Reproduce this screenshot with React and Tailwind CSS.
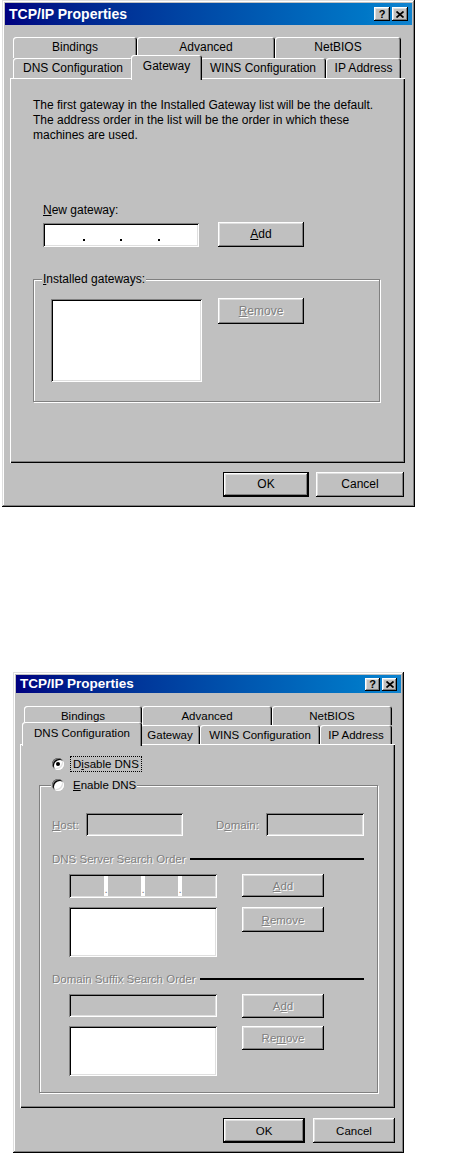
import React from 'react';

// win98 bevels, written out in full so tailwind picks them up
const RAISED = 'shadow-[inset_-1px_-1px_#000000,inset_1px_1px_#ffffff,inset_-2px_-2px_#808080,inset_2px_2px_#dfdfdf]';
const DEFAULT_BTN = 'shadow-[inset_0_0_0_1px_#000000,inset_-2px_-2px_#000000,inset_2px_2px_#ffffff,inset_-3px_-3px_#808080,inset_3px_3px_#dfdfdf]';
const SUNKEN = 'shadow-[inset_1px_1px_#808080,inset_-1px_-1px_#ffffff,inset_2px_2px_#000000,inset_-2px_-2px_#dfdfdf]';
const WINDOW = 'shadow-[inset_-1px_-1px_#000000,inset_1px_1px_#dfdfdf,inset_-2px_-2px_#808080,inset_2px_2px_#ffffff]';
const PANEL = 'shadow-[inset_1px_1px_#ffffff,inset_-1px_-1px_#000000,inset_-2px_-2px_#808080]';
const TAB = 'shadow-[inset_1px_1px_#ffffff,inset_-1px_0_#000000,inset_-2px_0_#808080]';
const ETCHED = 'border border-[#808080] shadow-[inset_1px_1px_#ffffff,1px_1px_#ffffff]';
const DISABLED = 'text-[#808080] [text-shadow:1px_1px_0_#ffffff]';

function CloseGlyph() {
  return (
    <svg width="8" height="7" viewBox="0 0 8 7">
      <path d="M0.5 0.5L7.5 6.5M7.5 0.5L0.5 6.5" stroke="#000000" strokeWidth="1.7" />
    </svg>
  );
}

function TitleBar({ className, textClass, btnClass }) {
  return (
    <div className={`flex items-center justify-between bg-linear-to-r from-[#000080] to-[#1084d0] ${className}`}>
      <span className={`font-bold text-white ${textClass}`}>TCP/IP Properties</span>
      <div className="flex gap-[2px]">
        <div className={`flex items-center justify-center bg-[#c0c0c0] ${RAISED} ${btnClass} text-[11px] font-bold leading-none text-black`}>?</div>
        <div className={`flex items-center justify-center bg-[#c0c0c0] ${RAISED} ${btnClass}`}>
          <CloseGlyph />
        </div>
      </div>
    </div>
  );
}

function Tab({ className, children }) {
  return (
    <div className={`flex shrink-0 items-center justify-center rounded-t-[3px] bg-[#c0c0c0] ${TAB} ${className}`}>
      {children}
    </div>
  );
}

function Button({ className, children, disabled, isDefault }) {
  return (
    <div
      className={`flex shrink-0 items-center justify-center bg-[#c0c0c0] ${isDefault ? DEFAULT_BTN : RAISED} ${disabled ? DISABLED : 'text-black'} ${className}`}
    >
      {children}
    </div>
  );
}

function Radio({ checked }) {
  return (
    <div className={`flex h-[12px] w-[12px] shrink-0 items-center justify-center rounded-full bg-white ${SUNKEN}`}>
      {checked && <div className="h-[4px] w-[4px] rounded-full bg-black" />}
    </div>
  );
}

function IpDot() {
  return <div className="mb-[6px] h-[2px] w-[2px] self-end bg-black" />;
}

function GatewayDialog() {
  return (
    <div className={`ml-[2px] flex h-[507px] w-[413px] flex-col bg-[#c0c0c0] p-[3px] ${WINDOW}`}>
      <TitleBar className="h-[22px] pl-[4px] pr-[4px]" textClass="text-[14px]" btnClass="h-[14px] w-[16px]" />

      <div className="ml-[5px] mt-[12px] w-[395px] text-[12px] leading-[15px] text-black">
        <div className="ml-[3px] flex h-[21px]">
          <Tab className="h-[21px] w-[124px]">Bindings</Tab>
          <Tab className="h-[21px] w-[138px]">Advanced</Tab>
          <Tab className="h-[21px] w-[126px]">NetBIOS</Tab>
        </div>
        <div className="ml-[3px] flex h-[20px] items-end">
          <Tab className="h-[20px] w-[120px]">DNS Configuration</Tab>
          <Tab className="relative z-10 -mx-[2px] mb-[-2px] h-[25px] w-[71px] pb-[3px]">Gateway</Tab>
          <Tab className="h-[20px] w-[126px]">WINS Configuration</Tab>
          <Tab className="h-[20px] w-[75px]">IP Address</Tab>
        </div>

        <div className={`h-[385px] pl-[23px] pt-[20px] ${PANEL}`}>
          <p>
            The first gateway in the Installed Gateway list will be the default.
            <br />
            The address order in the list will be the order in which these
            <br />
            machines are used.
          </p>

          <div className="ml-[10px] mt-[60px]">
            <u>N</u>ew gateway:
          </div>
          <div className="ml-[10px] mt-[4px] flex items-end">
            <div className={`flex h-[24px] w-[156px] bg-white px-[4px] ${SUNKEN}`}>
              <span className="flex-1" />
              <IpDot />
              <span className="flex-1" />
              <IpDot />
              <span className="flex-1" />
              <IpDot />
              <span className="flex-1" />
            </div>
            <Button className="ml-[19px] h-[25px] w-[86px]">
              <span>
                <u>A</u>dd
              </span>
            </Button>
          </div>

          <div className={`relative mt-[32px] h-[123px] w-[347px] ${ETCHED}`}>
            <div className="absolute -top-[8px] left-[8px] bg-[#c0c0c0] px-[1px]">
              <u>I</u>nstalled gateways:
            </div>
            <div className="flex items-start pl-[17px] pt-[19px]">
              <div className={`h-[83px] w-[151px] bg-white ${SUNKEN}`} />
              <Button disabled className="-mt-[1px] ml-[16px] h-[26px] w-[86px]">
                <span>
                  <u>R</u>emove
                </span>
              </Button>
            </div>
          </div>
        </div>

        <div className="mr-[1px] mt-[9px] flex justify-end gap-[7px]">
          <Button isDefault className="h-[25px] w-[86px]">OK</Button>
          <Button className="h-[25px] w-[88px]">Cancel</Button>
        </div>
      </div>
    </div>
  );
}

function SearchHeading({ children }) {
  return (
    <div className="ml-[12px] flex w-[312px] items-center">
      <span className={DISABLED}>{children}</span>
      <div className="ml-[4px] h-[2px] flex-1 bg-black" />
    </div>
  );
}

function DnsDialog() {
  return (
    <div className={`ml-[13px] mt-[165px] flex h-[481px] w-[391px] flex-col bg-[#c0c0c0] p-[3px] ${WINDOW}`}>
      <TitleBar className="h-[18px] pl-[4px] pr-[4px]" textClass="text-[13.5px]" btnClass="h-[13px] w-[15px]" />

      <div className="ml-[4px] mt-[13px] w-[375px] text-[11.5px] leading-[14px] text-black">
        <div className="ml-[4px] flex h-[19px]">
          <Tab className="h-[19px] w-[118px]">Bindings</Tab>
          <Tab className="h-[19px] w-[130px]">Advanced</Tab>
          <Tab className="h-[19px] w-[120px]">NetBIOS</Tab>
        </div>
        <div className="ml-[4px] flex h-[19px] items-end">
          <Tab className="relative z-10 -mx-[2px] mb-[-2px] h-[24px] w-[120px] pb-[3px]">DNS Configuration</Tab>
          <Tab className="h-[19px] w-[60px]">Gateway</Tab>
          <Tab className="h-[19px] w-[120px]">WINS Configuration</Tab>
          <Tab className="h-[19px] w-[72px]">IP Address</Tab>
        </div>

        <div className={`h-[364px] pt-[12px] ${PANEL}`}>
          <div className="ml-[32px] flex h-[16px] items-center">
            <Radio checked />
            <span className="ml-[6px] border border-dotted border-black px-[2px]">
              D<u>i</u>sable DNS
            </span>
          </div>

          <div className={`relative ml-[19px] mt-[13px] h-[308px] w-[339px] ${ETCHED}`}>
            <div className="absolute -top-[8px] left-[11px] flex items-center bg-[#c0c0c0] px-[1px]">
              <Radio />
              <span className="ml-[9px]">
                <u>E</u>nable DNS
              </span>
            </div>

            <div className="ml-[12px] mt-[27px] flex items-center">
              <span className={`w-[34px] ${DISABLED}`}>
                <u>H</u>ost:
              </span>
              <div className={`h-[23px] w-[97px] bg-[#c0c0c0] ${SUNKEN}`} />
              <span className={`ml-[33px] w-[50px] ${DISABLED}`}>
                D<u>o</u>main:
              </span>
              <div className={`h-[23px] w-[98px] bg-[#c0c0c0] ${SUNKEN}`} />
            </div>

            <div className="mt-[16px]">
              <SearchHeading>DNS Server Search Order</SearchHeading>
            </div>

            <div className="ml-[29px] mt-[8px] flex items-start">
              <div className={`flex h-[24px] w-[148px] p-[2px] ${SUNKEN}`}>
                <div className="flex-1 bg-[#c0c0c0]" />
                <div className="flex w-[4px] items-end justify-center bg-white text-[#808080]">.</div>
                <div className="flex-1 bg-[#c0c0c0]" />
                <div className="flex w-[4px] items-end justify-center bg-white text-[#808080]">.</div>
                <div className="flex-1 bg-[#c0c0c0]" />
                <div className="flex w-[4px] items-end justify-center bg-white text-[#808080]">.</div>
                <div className="flex-1 bg-[#c0c0c0]" />
              </div>
              <Button disabled className="ml-[25px] h-[23px] w-[82px]">
                <span>
                  <u>A</u>dd
                </span>
              </Button>
            </div>

            <div className="ml-[29px] mt-[9px] flex items-start">
              <div className={`h-[50px] w-[148px] bg-white ${SUNKEN}`} />
              <Button disabled className="ml-[25px] h-[25px] w-[82px]">
                <span>
                  <u>R</u>emove
                </span>
              </Button>
            </div>

            <div className="mt-[15px]">
              <SearchHeading>Domain Suffix Search Order</SearchHeading>
            </div>

            <div className="ml-[29px] mt-[8px] flex items-start">
              <div className={`h-[23px] w-[148px] bg-[#c0c0c0] ${SUNKEN}`} />
              <Button disabled className="ml-[25px] h-[24px] w-[82px]">
                <span>
                  A<u>d</u>d
                </span>
              </Button>
            </div>

            <div className="ml-[29px] mt-[8px] flex items-start">
              <div className={`h-[50px] w-[148px] bg-white ${SUNKEN}`} />
              <Button disabled className="ml-[25px] h-[24px] w-[82px]">
                <span>
                  Re<u>m</u>ove
                </span>
              </Button>
            </div>
          </div>
        </div>

        <div className="mt-[10px] flex justify-end gap-[8px]">
          <Button isDefault className="h-[25px] w-[82px]">OK</Button>
          <Button className="h-[25px] w-[82px]">Cancel</Button>
        </div>
      </div>
    </div>
  );
}

export default function App() {
  return (
    <div className="min-h-screen w-full bg-white font-['Liberation_Sans',Arial,sans-serif]">
      <GatewayDialog />
      <DnsDialog />
    </div>
  );
}
